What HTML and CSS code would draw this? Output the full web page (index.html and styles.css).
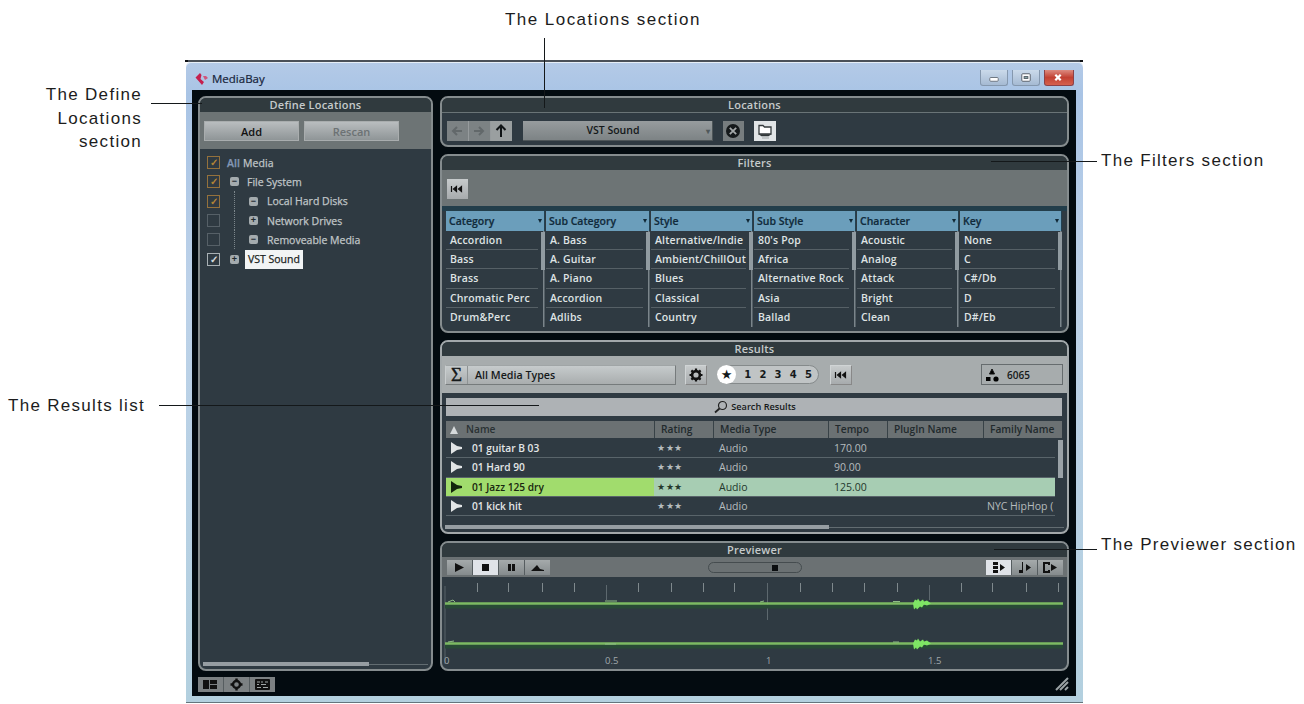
FILE: index.html
```html
<!DOCTYPE html>
<html lang="en">
<head>
<meta charset="utf-8">
<title>MediaBay</title>
<link rel="stylesheet" href="styles.css">
</head>
<body>
<main class="figure">
  <div class="window">
    <header class="titlebar">
      <svg class="logo" viewBox="0 0 14 14"><path d="M5 1L0.5 5.5L7 13L9 10L5.500 7L6.500 3Z" fill="#c51f4e"/><path d="M8 4l3 0 2 2-3 2z" fill="#d0567c"/></svg>
      <span class="app-name">MediaBay</span>
      <div class="win-buttons">
        <span class="wb"><svg viewBox="0 0 27 16"><rect x="9" y="8" width="9" height="4" rx="1" fill="#fff" stroke="#69717c"/></svg></span>
        <span class="wb"><svg viewBox="0 0 27 16"><rect x="9" y="4" width="9" height="8" rx="1" fill="#fff" stroke="#555d66"/><rect x="11.500" y="7" width="4" height="2" fill="#8aa" stroke="#555d66"/></svg></span>
        <span class="wb close"><svg viewBox="0 0 29 16"><path d="M11.500 5l6 6M17.500 5l-6 6" stroke="#fff" stroke-width="2.500"/></svg></span>
      </div>
    </header>
    <div class="client">
      <div class="panels">
        <section class="panel define">
          <h2>Define Locations</h2>
          <div class="define-tools"><button>Add</button><button class="off">Rescan</button></div>
          <ul class="tree">
            <li><i class="cb gold">✓</i><span class="all"><b>All</b> Media</span></li>
            <li><i class="cb gold">✓</i><i class="ex l1">−</i><span>File System</span></li>
            <li><i class="cb gold">✓</i><i class="ex l2">−</i><span>Local Hard Disks</span></li>
            <li><i class="cb"></i><i class="ex l2">+</i><span>Network Drives</span></li>
            <li><i class="cb"></i><i class="ex l2">−</i><span>Removeable Media</span></li>
            <li><i class="cb on">✓</i><i class="ex l1">+</i><span class="sel">VST Sound</span></li>
          </ul>
          <div class="hscroll"><i></i></div>
        </section>
        <div class="right">
          <section class="panel locations">
            <h2>Locations</h2>
            <div class="loc-tools">
              <div class="nav">
                <span><svg viewBox="0 0 20 20"><path d="M15 10H6M10 6l-4 4 4 4" class="faint"/></svg></span>
                <span><svg viewBox="0 0 20 20"><path d="M5 10h9M10 6l4 4-4 4" class="faint"/></svg></span>
                <span class="lit"><svg viewBox="0 0 20 20"><path d="M10 16V5M5.500 9L10 4.500 14.500 9" class="arrow"/></svg></span>
              </div>
              <div class="combo">VST Sound<i>▾</i></div>
              <span class="sq clear"><svg viewBox="0 0 20 20"><circle cx="10" cy="10" r="7" fill="#15191b"/><path d="M6.800 6.800l6.400 6.400M13.200 6.800l-6.400 6.400" stroke="#a4a8a9" stroke-width="1.800"/></svg></span>
              <span class="sq folder"><svg viewBox="0 0 22 20"><path d="M5 13V4.500h4l1.500 1.500H17v7z" fill="#fff" stroke="#343a3d" stroke-width="1.300"/><path d="M4.500 13.200h13l-3 2h-7z" fill="#303638"/><path d="M8 17h7" stroke="#a3a8aa"/></svg></span>
            </div>
          </section>
          <section class="panel filters">
            <h2>Filters</h2>
            <div class="filter-tools"><span class="sq reset"><svg viewBox="0 0 20 20"><path d="M4.500 7v6M9.500 7.500v5L6.500 10zM14.500 7.500v5L11.500 10z" class="rw"/></svg></span></div>
            <div class="columns">
              <div class="col"><h3>Category<i></i></h3><ul><li>Accordion</li><li>Bass</li><li>Brass</li><li>Chromatic Perc</li><li>Drum&amp;Perc</li></ul></div>
              <div class="col"><h3>Sub Category<i></i></h3><ul><li>A. Bass</li><li>A. Guitar</li><li>A. Piano</li><li>Accordion</li><li>Adlibs</li></ul></div>
              <div class="col"><h3>Style<i></i></h3><ul><li>Alternative/Indie</li><li>Ambient/ChillOut</li><li>Blues</li><li>Classical</li><li>Country</li></ul></div>
              <div class="col"><h3>Sub Style<i></i></h3><ul><li>80's Pop</li><li>Africa</li><li>Alternative Rock</li><li>Asia</li><li>Ballad</li></ul></div>
              <div class="col"><h3>Character<i></i></h3><ul><li>Acoustic</li><li>Analog</li><li>Attack</li><li>Bright</li><li>Clean</li></ul></div>
              <div class="col"><h3>Key<i></i></h3><ul><li>None</li><li>C</li><li>C#/Db</li><li>D</li><li>D#/Eb</li></ul></div>
            </div>
          </section>
          <section class="panel results">
            <h2>Results</h2>
            <div class="result-tools">
              <div class="types"><span class="sigma">Σ</span><span>All Media Types</span></div>
              <span class="sq gear"><svg viewBox="0 0 20 20"><circle cx="10" cy="10" r="3.900" fill="none" stroke="#111" stroke-width="2.600"/><path d="M10 3.500v2M10 14.500v2M3.500 10h2M14.500 10h2M5.400 5.400l1.400 1.400M13.200 13.200l1.400 1.400M5.400 14.600l1.400-1.400M13.200 6.800l1.400-1.400" stroke="#111" stroke-width="2.200"/></svg></span>
              <div class="stars"><span class="star">★</span><span>1</span><span>2</span><span>3</span><span>4</span><span>5</span></div>
              <span class="sq reset"><svg viewBox="0 0 20 20"><path d="M4.500 7v6M9.500 7.500v5L6.500 10zM14.500 7.500v5L11.500 10z" class="rw"/></svg></span>
              <div class="count"><svg viewBox="0 0 14 14"><path d="M7 1l2.500 5h-5z" stroke="#111"/><rect x="1" y="9" width="4.500" height="4"/><circle cx="11" cy="11" r="2.600"/></svg>6065</div>
            </div>
            <div class="search"><svg viewBox="0 0 14 14"><circle cx="8.500" cy="5.500" r="4" fill="none" stroke="#222" stroke-width="1.200"/><path d="M5.500 8.500L1 12.500" stroke="#222" stroke-width="1.700"/></svg>Search Results</div>
            <div class="row head"><span><i class="sort"></i>Name</span><span>Rating</span><span>Media Type</span><span>Tempo</span><span>PlugIn Name</span><span>Family Name</span></div>
            <div class="rows">
              <div class="row"><span><svg viewBox="0 0 13 12"><path d="M1 0v12L7 8l5-1V5L7 4z"/></svg>01 guitar B 03</span><span>★★★</span><span>Audio</span><span>170.00</span><span></span><span></span></div>
              <div class="row"><span><svg viewBox="0 0 13 12"><path d="M1 0v12L7 8l5-1V5L7 4z"/></svg>01 Hard 90</span><span>★★★</span><span>Audio</span><span>90.00</span><span></span><span></span></div>
              <div class="row picked"><span><svg viewBox="0 0 13 12"><path d="M1 0v12L7 8l5-1V5L7 4z"/></svg>01 Jazz 125 dry</span><span>★★★</span><span>Audio</span><span>125.00</span><span></span><span></span></div>
              <div class="row"><span><svg viewBox="0 0 13 12"><path d="M1 0v12L7 8l5-1V5L7 4z"/></svg>01 kick hit</span><span>★★★</span><span>Audio</span><span></span><span></span><span>NYC HipHop (</span></div>
            </div>
            <div class="hscroll"><i></i></div>
          </section>
          <section class="panel preview">
            <h2>Previewer</h2>
            <div class="preview-tools">
              <div class="seg">
                <span><svg viewBox="0 0 25 15"><path d="M8 3l9 4.500L8 12z"/></svg></span>
                <span class="lit"><svg viewBox="0 0 25 15"><rect x="9" y="4" width="7" height="7"/></svg></span>
                <span><svg viewBox="0 0 25 15"><path d="M9 4h3v7H9zM13 4h3v7h-3z"/></svg></span>
                <span><svg viewBox="0 0 25 15"><path d="M6 11l6-6 3 4 4 1v1z"/></svg></span>
              </div>
              <div class="slider"><i></i></div>
              <div class="seg">
                <span class="lit"><svg viewBox="0 0 25 15"><path d="M7 2h5v3H7zM7 6h5v3H7zM7 10h5v3H7zM14 4l5 3.500-5 3.500z"/></svg></span>
                <span><svg viewBox="0 0 25 15"><path d="M10 2h1v11H7v-3h3zM14 4l5 3.500-5 3.500z"/></svg></span>
                <span><svg viewBox="0 0 25 15"><path d="M11 3H6v9h5M11 2v3M11 10v3" fill="none" stroke="#111" stroke-width="2"/><path d="M13 4l6 3.500-6 3.500z"/></svg></span>
              </div>
            </div>
            <svg class="wave" viewBox="442 577 625 92">
              <path d="M445 586V664" stroke="#596369"/>
              <path d="M477.500 583v9M508.500 583v9M542.500 583v9M574.500 583v9M638.500 583v9M671.500 583v9M703.500 583v9M734.500 583v9M800.500 583v9M832.500 583v9M864.500 583v9M897.500 583v9M961.500 583v9M992.500 583v9M1026.500 583v9M1058.500 583v9" stroke="#7f898d"/>
              <path d="M606.500 585v15M767.500 583v37M929.500 585v15" stroke="#5d686e"/>
              <path d="M445 606.500H1063M445 646.500H1063" stroke="#284a36" stroke-width="4"/>
              <path d="M445 603.500H1063M445 643.500H1063" stroke="#7cba62" stroke-width="2.400"/>
              <path d="M448 602l5-2 2 2M605 601h12M760 602l4-1M893 601.500h7M605 644h11M893 642h6M448 642l6-1" stroke="#8fbd86" fill="none"/>
              <g fill="#7ee564"><path d="M913 603.500l2-4 2 1 1-2 2 3 3-2 1 2 3-1 4 3-4 2-3-1-2 3-2-1-3 3-1-2-2 2z"/><path d="M913 643.500l2-4 2 1 1-2 2 3 3-2 1 2 3-1 4 3-4 2-3-1-2 3-2-1-3 3-1-2-2 2z"/></g>
              <g class="time"><text x="444" y="664">0</text><text x="605" y="664">0.5</text><text x="766" y="664">1</text><text x="928" y="664">1.5</text></g>
            </svg>
          </section>
        </div>
      </div>
      <footer class="statusbar">
        <div class="seg">
          <span><svg viewBox="0 0 25 15"><path d="M5 3h6v9H5zM12 3h7v4h-7zM12 8h7v4h-7z"/></svg></span>
          <span><svg viewBox="0 0 25 15"><circle cx="12.500" cy="7.500" r="3.500" fill="none" stroke="#111" stroke-width="2.400"/><path d="M12.500 1.500v2M12.500 11.500v2M6.500 7.500h2M16.500 7.500h2" stroke="#111" stroke-width="2.400"/></svg></span>
          <span><svg viewBox="0 0 25 15"><rect x="5" y="2" width="15" height="11" rx="1"/><path d="M7 5h3M11 5h2M15 5h3M7 7.500h2M11 7.500h5M7 10.500h4M13 10.500h5" stroke="#a0a5a6" stroke-width="1.200"/></svg></span>
        </div>
        <svg class="grip" viewBox="0 0 14 14"><path d="M1 13L13 1M5 13l8-8M10 13l3-3" stroke="#9aa2a4" stroke-width="2"/></svg>
      </footer>
    </div>
  </div>
  <i class="top-rule"></i>
  <p class="note n-loc">The Locations section</p>
  <p class="note n-def">The Define<br>Locations<br>section</p>
  <p class="note n-res">The Results list</p>
  <p class="note n-fil">The Filters section</p>
  <p class="note n-pre">The Previewer section</p>
  <i class="lead l-loc"></i><i class="lead l-def"></i><i class="lead l-res"></i><i class="lead l-fil"></i><i class="lead l-pre"></i>
</main>
</body>
</html>
```

FILE: styles.css
```css
* { box-sizing: border-box; }
body { margin: 0; background: #fff; font: 600 10.5px/14px "Open Sans", "Noto Sans", sans-serif; color: #dfe3e4; }
h2, h3, ul, p { margin: 0; padding: 0; font-size: inherit; font-weight: inherit; }
ul { list-style: none; }
i { font-style: normal; }
svg { display: block; flex: none; }
.figure { position: relative; width: 1304px; height: 704px; padding: 62px 0 0 186px; overflow: hidden; }
.window { width: 897px; height: 641px; padding: 0 7px 6px 6px; display: flex; flex-direction: column; background: linear-gradient(#b4cae7, #a9c4e5 5%, #bdd2e9 35%, #b3d0df); border-bottom: 1px solid #64757d; border-radius: 5px 5px 0 0; box-shadow: inset 0 1px #e6eef7; }
.titlebar { height: 28px; display: flex; align-items: center; padding: 5px 0 0 3px; flex: none; }
.logo { width: 14px; height: 14px; margin-right: 3px; }
.app-name { font-weight: 400; font-size: 11.500px; color: #17243a; -webkit-text-stroke: .2px; }
.win-buttons { margin: -1px 2px 0 auto; display: flex; gap: 4px; }
.wb { width: 28px; height: 16px; border: 1px solid #8598ae; border-top: 0; border-radius: 0 0 3px 3px; background: linear-gradient(#cbdaea, #a5bad3); }
.wb svg { width: 26px; height: 15px; }
.close { width: 30px; background: linear-gradient(#dc8b80, #c24133 50%, #d5604e); border-color: #8c4148; }
.client { flex: 1; background: #030b10; padding: 6px 7px 0 6px; display: flex; flex-direction: column; }
.panels { display: flex; gap: 7px; height: 575px; }
.panel { border: 2px solid #858c8e; border-radius: 8px; background: #2f3a42; overflow: hidden; display: flex; flex-direction: column; flex: none; }
.panel h2 { height: 14px; line-height: 13px; text-align: center; font-size: 11px; letter-spacing: .2px; background: #303a3e; color: #c5cacb; flex: none; }
.define { width: 235px; padding-bottom: 2px; }
.right { width: 630px; display: flex; flex-direction: column; gap: 7px; }
.define-tools { height: 37px; background: #6d7475; padding: 9px 4px 8px; display: flex; gap: 5px; flex: none; }
.define-tools button { width: 95px; height: 20px; border: 1px solid #a9adae; padding: 0; background: linear-gradient(#b9bdbf, #8f9597); font: 600 11px "Open Sans", sans-serif; color: #111; }
.define-tools .off { color: #6c7274; }
.tree { padding: 4px 0 0 7px; }
.tree li { height: 19.300px; display: flex; align-items: center; color: #c0c6c8; font-weight: 400; -webkit-text-stroke: .25px; }
.all { margin-left: 7px; letter-spacing: .1px; }
.all b { color: #8497b5; font-weight: 600; }
.cb { width: 13px; height: 13px; border: 1px solid #566067; line-height: 11px; text-align: center; font-size: 10px; flex: none; }
.gold { border-color: #94713c; color: #c08d35; }
.on { border-color: #a8b0b4; color: #e4e8ea; }
.ex { width: 9px; height: 9px; border-radius: 2px; background: #a4abae; color: #20292e; font: 700 9px/8px "Liberation Sans", sans-serif; text-align: center; -webkit-text-stroke: 0; flex: none; }
.l1 { margin: 0 8px 0 10px; }
.l2 { margin: 0 9px 0 29px; position: relative; }
.l2::before { content: ""; position: absolute; left: -15px; top: -6px; height: 20px; border-left: 1px dotted #7c868b; }
.sel { background: #f2f4f5; color: #1a1f22; height: 19px; line-height: 19px; padding: 0 3px; margin-left: -2px; }
.hscroll { margin: auto 3px 0; height: 6px; display: flex; align-items: center; background: linear-gradient(#626c71, #626c71) 0 50% / 100% 1px no-repeat; flex: none; }
.hscroll i { height: 4px; width: 166px; background: #969da2; }
.locations { height: 51px; }
.locations h2 { height: 15px; border-bottom: 1px solid #6a7477; }
.loc-tools { display: flex; padding: 8px 5px; }
.nav { display: flex; background: #969b9d; width: 65px; height: 20px; margin-right: 11px; gap: 1px; }
.nav span { background: #7c8284; width: 21px; }
.nav .lit { background: #9a9fa0; }
.nav svg, .sq svg { width: 20px; height: 20px; }
.faint { fill: none; stroke: #62686a; stroke-width: 2; }
.arrow { fill: none; stroke: #101416; stroke-width: 2; }
.combo { width: 190px; height: 20px; line-height: 19px; text-align: center; padding-right: 9px; background: linear-gradient(#979c9e, #7d8385); color: #14181a; position: relative; margin-right: 10px; border: solid #4e5659; border-width: 0 1px 1px 0; }
.combo i { position: absolute; right: 2px; font-size: 8px; color: #50585b; }
.sq { display: block; width: 21px; height: 20px; background: linear-gradient(#c7cbcc, #a7abad); flex: none; }
.clear { background: #777d7f; margin-right: 10px; }
.folder { width: 22px; background: #e0e4e6; }
.folder svg { width: 22px; }
.rw { fill: #111; stroke: #111; stroke-width: 1.200; }
.filters { height: 179px; }
.filter-tools { height: 36px; background: #6d7475; padding: 9px 5px; flex: none; }
.columns { display: grid; grid-template-columns: 100px 105px 103px 103px 103px 103px; padding: 5px 0 0 4px; background: linear-gradient(#233e4b 5px, transparent 5px); }
.col { padding-right: 1px; }
.col h3 { height: 20px; background: #6b9ebb; color: #112b3b; line-height: 19px; padding-left: 3px; border-right: 1px solid #234151; display: flex; justify-content: space-between; align-items: center; font-size: 10.500px; -webkit-text-stroke: .2px; }
.col h3 i { border: 2.500px solid transparent; border-top: 4px solid #102836; border-bottom: 0; margin-right: 2px; }
.col ul { background: linear-gradient(#919ba1, #919ba1) 100% 1px / 4px 38px no-repeat, linear-gradient(#7b858b, #7b858b) calc(100% - 1px) 0 / 1.500px 96px no-repeat; padding-right: 7px; }
.col li { height: 19.200px; line-height: 19px; padding-left: 4px; white-space: nowrap; border-bottom: 1px solid #566066; letter-spacing: .15px; }
.col li:last-child { border: 0; }
.results { height: 194px; border-color: #a2a8aa; padding-bottom: 2px; }
.result-tools { height: 37px; background: #a7acad; display: flex; align-items: center; padding: 0 4px 0 3px; flex: none; color: #15191a; }
.types { width: 231px; height: 20px; line-height: 18px; display: flex; background: linear-gradient(#c6cbcc, #a9adae); border: 1px solid; border-color: #a0a5a6 #767b7c #767b7c #c9cdce; margin-right: 9px; gap: 7px; font-size: 10.700px; }
.sigma { width: 22px; text-align: center; border-right: 1px solid #8e9394; font: 400 19px/17px "Liberation Serif", serif; -webkit-text-stroke: .4px; }
.results .sq { border: 1px solid #d0d4d5; border-right-color: #888; border-bottom-color: #888; width: 22px; }
.results .sq svg { margin-top: -1px; }
.stars { width: 102px; height: 19px; margin: 0 11px 0 10px; border-radius: 10px; border: 1px solid #858a8b; background: #c0c4c5; display: flex; align-items: center; justify-content: space-between; padding-right: 6px; font: 700 10px "DejaVu Sans", sans-serif; }
.star { width: 19px; height: 19px; border-radius: 10px; background: #fff; text-align: center; line-height: 19px; font-size: 13px; margin-left: -1px; }
.count { margin-left: auto; width: 82px; height: 21px; border: 1px solid #666c6e; display: flex; align-items: center; gap: 8px; padding-left: 3px; font-size: 10px; }
.count svg { width: 14px; height: 14px; }
.search { margin: 5px 5px 5px 4px; height: 18px; background: #aeb2b5; color: #15191a; display: flex; align-items: center; justify-content: center; gap: 3px; padding-left: 2px; flex: none; font-size: 9.200px; }
.search svg { width: 14px; height: 14px; }
.row { display: grid; grid-template-columns: 208px 59px 115px 59px 96px 72px; height: 19.300px; border-bottom: 1px solid #59646a; line-height: 18px; font-weight: 400; white-space: nowrap; color: #b6bcbe; }
.row span { padding-left: 6px; }
.row span:nth-child(2) { font-size: 9px; letter-spacing: .6px; padding-left: 3px; }
.row span:first-child { display: flex; align-items: center; padding-left: 4px; gap: 9px; font-weight: 600; font-size: 10.200px; color: #e3e6e7; }
.row svg { width: 13px; height: 12px; fill: #e2e5e6; }
.rows { margin: 1px 12px 0 4px; position: relative; }
.rows::after { content: ""; position: absolute; right: -8px; top: 1px; width: 5px; height: 38px; background: #9aa2a7; }
.row:not(.head) span:last-child { padding-left: 4px; }
.head { height: 17px; grid-template-columns: 208px 59px 115px 59px 96px 79px; margin: 0 5px 0 4px; line-height: 17px; background: #6b7173; border: 0; color: #222a2d; font-weight: 600; font-size: 10.200px; flex: none; }
.head span { border-left: 1px solid #384247; }
.head span:first-child { color: #2a3134; border: 0; gap: 8px; }
.row.head span:nth-child(2) { font-size: 10.200px; padding-left: 6px; letter-spacing: 0; }
.sort { border: 4.500px solid transparent; border-bottom: 8px solid #d6dadb; border-top: 0; }
.picked { background: linear-gradient(90deg, #a1dc6d 208px, #a7cdb3 208px); color: #24382c; }
.picked span:first-child { color: #18260f; }
.picked svg { fill: #13250d; }
.results .hscroll i { width: 384px; }
.preview { height: 130px; }
.preview-tools { height: 20px; background: #6b7173; display: flex; align-items: center; padding: 0 4px 0 5px; flex: none; }
.seg { display: flex; gap: 1px; background: #565d60; }
.seg span { width: 25px; height: 15px; background: linear-gradient(#a5aaab, #858b8d); }
.seg .lit { background: #e0e3e8; }
.seg svg { width: 25px; height: 15px; fill: #111; }
.slider { width: 94px; height: 11px; border: 1px solid #454c4f; border-radius: 6px; margin: 0 auto 0 158px; padding: 2px 0 0 63px; }
.slider i { display: block; width: 6px; height: 6px; background: #0b0e10; }
.wave { width: 625px; height: 92px; }
.time { font: 400 9.500px "Open Sans", sans-serif; fill: #a0a7aa; }
.statusbar { display: flex; justify-content: space-between; padding: 6px 0 0; }
.statusbar .seg { height: 15px; }
.statusbar .seg span { background: #7c8183; }
.grip { width: 14px; height: 14px; }
.top-rule { position: absolute; left: 185px; top: 60px; width: 898px; height: 2px; background: #4a5058; border: solid #101216; border-width: 0 3px; }
.note { position: absolute; font: 400 17px/23.500px "Liberation Sans", Arial, sans-serif; color: #1c1c1c; white-space: nowrap; letter-spacing: 1.300px; }
.n-loc { left: 505px; top: 8px; letter-spacing: 1.450px; }
.n-def { right: 1162px; top: 83px; text-align: right; }
.n-res { left: 8px; top: 394px; }
.n-fil { left: 1101px; top: 149px; }
.n-pre { left: 1101px; top: 533px; }
.lead { position: absolute; background: #14181a; height: 1px; }
.l-loc { left: 544px; top: 38px; width: 1px; height: 70px; }
.l-def { left: 151px; top: 103px; width: 51px; }
.l-res { left: 159px; top: 405px; width: 380px; }
.l-fil { left: 991px; top: 161px; width: 106px; }
.l-pre { left: 994px; top: 549px; width: 103px; }
```
